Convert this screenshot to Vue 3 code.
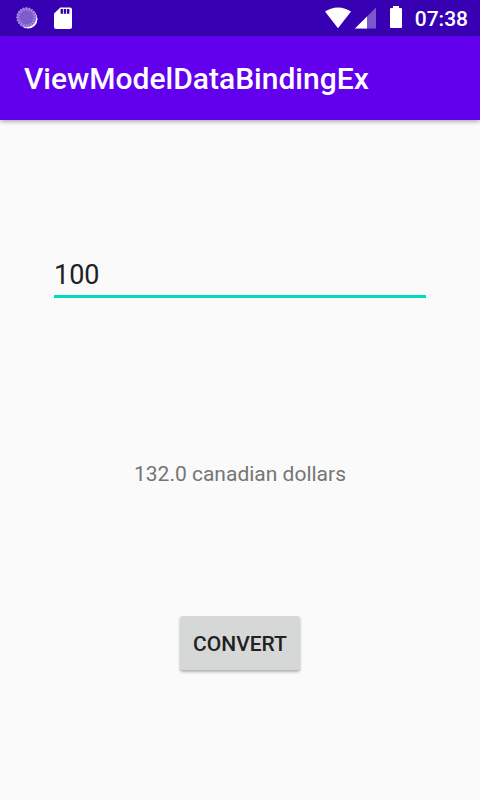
<script setup>
import { ref } from 'vue'

const RATE = 1.32
const amount = ref('100')
const result = ref('132.0 canadian dollars')

// Radial ticks of the sync indicator, one every 18 degrees
const ticks = Array.from({ length: 20 }, (_, i) => i * 18)

function convert() {
  const value = Number.parseFloat(amount.value)
  if (Number.isNaN(value)) {
    result.value = 'No value'
    return
  }
  const total = Math.round(value * RATE * 100) / 100
  result.value = `${Number.isInteger(total) ? total.toFixed(1) : total} canadian dollars`
}
</script>

<template>
  <div class="screen">
    <div class="status-bar">
      <div class="status-group notifications">
        <svg class="icon" width="22" height="22" viewBox="0 0 22 22" aria-hidden="true">
          <circle cx="12" cy="12" r="9.5" fill="#fff" />
          <circle cx="10.4" cy="10.4" r="9.8" fill="#805bd0" />
          <g stroke="#a68fdd" stroke-width="1.4">
            <line
              v-for="angle in ticks"
              :key="angle"
              x1="10.4"
              y1="0.2"
              x2="10.4"
              y2="3.4"
              :transform="`rotate(${angle} 10.4 10.4)`"
            />
          </g>
        </svg>
        <svg class="icon" width="18" height="22" viewBox="0 0 18 22" aria-hidden="true">
          <path
            fill="#fff"
            fill-rule="evenodd"
            d="M6.4 0.4H16a2 2 0 0 1 2 2V20a2 2 0 0 1-2 2H2a2 2 0 0 1-2-2V6.6ZM6.6 2v4.8h2.4V2ZM9.8 2v4.8h2.4V2ZM13 2v4.8h2.4V2Z"
          />
        </svg>
      </div>
      <div class="status-group system">
        <svg class="icon" width="26" height="22" viewBox="0 0 26 22" aria-hidden="true">
          <path fill="#fff" d="M13 21.2 0 4.6C3.4 2 8 0.4 13 0.4S22.6 2 26 4.6Z" />
        </svg>
        <svg class="icon signal" width="21" height="22" viewBox="0 0 21 22" aria-hidden="true">
          <path fill="#7b57cc" d="M21 0.6V21.6H0Z" />
          <path fill="#fff" d="M12 9.6V21.6H0Z" />
        </svg>
        <svg class="icon battery" width="12" height="22" viewBox="0 0 12 22" aria-hidden="true">
          <path fill="#fff" d="M3 0h6v2h2a1 1 0 0 1 1 1v18a1 1 0 0 1-1 1H1a1 1 0 0 1-1-1V3a1 1 0 0 1 1-1h2Z" />
        </svg>
        <time class="clock" datetime="07:38">07:38</time>
      </div>
    </div>

    <header class="app-bar">
      <h1 class="title">ViewModelDataBindingEx</h1>
    </header>

    <main class="content">
      <input v-model="amount" class="amount" type="text" inputmode="decimal" aria-label="Amount" />
      <p class="result" aria-live="polite">{{ result }}</p>
      <button class="convert" type="button" @click="convert">CONVERT</button>
    </main>
  </div>
</template>

<style>
body {
  background: #fafafa;
}
</style>

<style scoped>
.screen {
  display: flex;
  flex-direction: column;
  min-height: 100vh;
  background: #fafafa;
  font-family: Roboto, "Liberation Sans", sans-serif;
}

.status-bar {
  display: flex;
  align-items: center;
  justify-content: space-between;
  height: 36px;
  padding: 0 12px 0 16px;
  background: #3700b3;
}

.status-group {
  display: flex;
  align-items: center;
}

.notifications {
  gap: 16px;
}

.icon {
  display: block;
  flex: none;
}

.signal {
  margin-left: 4px;
}

.battery {
  margin: 0 13px 2px 14px;
}

.clock {
  padding-top: 2px;
  color: #fff;
  font-size: 21px;
  font-weight: 500;
  line-height: 24px;
}

.app-bar {
  box-sizing: border-box;
  display: flex;
  align-items: center;
  height: 84px;
  padding: 2px 24px 0;
  background: #6200ee;
  box-shadow: 0 1px 5px rgba(0, 0, 0, 0.4);
}

.title {
  margin: 0;
  color: #fff;
  font-size: 30px;
  font-weight: 500;
  line-height: 36px;
}

.content {
  display: flex;
  flex-direction: column;
  align-items: center;
  padding: 136px 54px 48px;
}

.amount {
  box-sizing: border-box;
  width: 100%;
  height: 42px;
  margin: 0;
  padding: 0 0 2px;
  border: 0;
  border-bottom: 3px solid #03dac5;
  border-radius: 0;
  outline: 0;
  background: transparent;
  color: #212121;
  font-family: inherit;
  font-size: 27px;
}

.result {
  margin: 164px 0 0;
  color: #757575;
  font-size: 21px;
  line-height: 24px;
}

.convert {
  height: 54px;
  margin: 130px 0 0;
  padding: 2px 13px 0;
  border: 0;
  border-radius: 3px;
  background: #d6d7d7;
  box-shadow: 0 2px 3px rgba(0, 0, 0, 0.3);
  color: #212121;
  font-family: inherit;
  font-size: 21px;
  font-weight: 500;
  cursor: pointer;
}
</style>
